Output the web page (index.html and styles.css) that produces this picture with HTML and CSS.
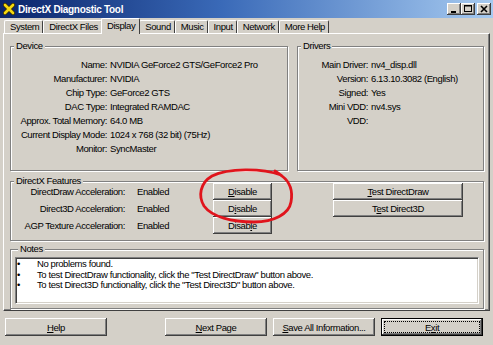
FILE: index.html
```html
<!DOCTYPE html>
<html>
<head>
<meta charset="utf-8">
<title>DirectX Diagnostic Tool</title>
<link rel="stylesheet" href="styles.css">
</head>
<body>
<div class="window">
  <div class="titlebar">
    <svg class="appicon" width="12" height="12" viewBox="0 0 12 12">
      <path d="M2 2 L10 10 M10 2 L2 10" stroke="#3a3000" stroke-width="4.2" stroke-linecap="round"/>
      <path d="M2 2 L10 10 M10 2 L2 10" stroke="#f4d810" stroke-width="2.6" stroke-linecap="round"/>
    </svg>
    <span class="title">DirectX Diagnostic Tool</span>
    <div class="controls">
      <span class="ctl"><svg width="14" height="12" viewBox="0 0 14 12"><rect x="4" y="8" width="5" height="2" fill="#000"/></svg></span>
      <span class="ctl"><svg width="14" height="12" viewBox="0 0 14 12"><rect x="3.5" y="2.5" width="7" height="6" fill="none" stroke="#000"/><rect x="3.5" y="2.5" width="7" height="1" fill="#000"/></svg></span>
      <span class="ctl close"><svg width="14" height="12" viewBox="0 0 14 12"><path d="M4 3 L10 9 M10 3 L4 9" stroke="#000" stroke-width="1.6"/></svg></span>
    </div>
  </div>

  <div class="body">
    <div class="tabs">
      <span class="tab">System</span>
      <span class="tab">DirectX Files</span>
      <span class="tab active">Display</span>
      <span class="tab">Sound</span>
      <span class="tab">Music</span>
      <span class="tab">Input</span>
      <span class="tab">Network</span>
      <span class="tab">More Help</span>
    </div>

    <div class="panel">
      <div class="toprow">
        <fieldset class="group device">
          <legend>Device</legend>
          <div class="kv kv-device">
            <span class="k">Name:</span><span class="v">NVIDIA GeForce2 GTS/GeForce2 Pro</span>
            <span class="k">Manufacturer:</span><span class="v">NVIDIA</span>
            <span class="k">Chip Type:</span><span class="v">GeForce2 GTS</span>
            <span class="k">DAC Type:</span><span class="v">Integrated RAMDAC</span>
            <span class="k">Approx. Total Memory:</span><span class="v">64.0 MB</span>
            <span class="k">Current Display Mode:</span><span class="v">1024 x 768 (32 bit) (75Hz)</span>
            <span class="k">Monitor:</span><span class="v">SyncMaster</span>
          </div>
        </fieldset>
        <fieldset class="group drivers">
          <legend>Drivers</legend>
          <div class="kv kv-drivers">
            <span class="k">Main Driver:</span><span class="v">nv4_disp.dll</span>
            <span class="k">Version:</span><span class="v">6.13.10.3082 (English)</span>
            <span class="k">Signed:</span><span class="v">Yes</span>
            <span class="k">Mini VDD:</span><span class="v">nv4.sys</span>
            <span class="k">VDD:</span><span class="v"></span>
          </div>
        </fieldset>
      </div>

      <fieldset class="group features">
        <legend>DirectX Features</legend>
        <div class="feat">
          <div class="featgrid">
            <span class="fk">DirectDraw Acceleration:</span><span class="fs">Enabled</span><button class="btn small"><u>D</u>isable</button>
            <span class="fk">Direct3D Acceleration:</span><span class="fs">Enabled</span><button class="btn small">D<u>i</u>sable</button>
            <span class="fk">AGP Texture Acceleration:</span><span class="fs">Enabled</span><button class="btn small">Disab<u>l</u>e</button>
          </div>
          <div class="tests">
            <button class="btn test"><u>T</u>est DirectDraw</button>
            <button class="btn test">T<u>e</u>st Direct3D</button>
          </div>
        </div>
      </fieldset>

      <fieldset class="group notes">
        <legend>Notes</legend>
        <div class="notebox">
          <div class="note"><span class="bullet">•</span><span>No problems found.</span></div>
          <div class="note"><span class="bullet">•</span><span>To test DirectDraw functionality, click the "Test DirectDraw" button above.</span></div>
          <div class="note"><span class="bullet">•</span><span>To test Direct3D functionality, click the "Test Direct3D" button above.</span></div>
        </div>
      </fieldset>
    </div>

    <div class="actions">
      <button class="btn wide"><u>H</u>elp</button>
      <button class="btn wide push"><u>N</u>ext Page</button>
      <button class="btn wide"><u>S</u>ave All Information...</button>
      <button class="btn wide default"><span class="focus">E<u>x</u>it</span></button>
    </div>
  </div>

  <svg class="markup" width="493" height="345" viewBox="0 0 493 345">
    <path d="M281 175 C262 168 228 168 212 176 C200 183 198 196 204 206 C212 217 232 222 254 222 C274 222 289 214 291 202 C293 191 290 182 282 176 C279 174 277 172 275 171"
          fill="none" stroke="#e0141c" stroke-width="2.8" stroke-linecap="round"/>
  </svg>
</div>
</body>
</html>
```
FILE: styles.css
```css
* { box-sizing: border-box; }

body {
  margin: 0;
  background: #d4d0c8;
  font-family: "Liberation Sans", Arial, sans-serif;
  font-size: 9.5px;
  letter-spacing: -0.4px;
  color: #000;
}

.window {
  position: relative;
  width: 493px;
  height: 345px;
  background: #d4d0c8;
  overflow: hidden;
}

/* title bar */
.titlebar {
  display: flex;
  align-items: center;
  height: 18px;
  padding-left: 3px;
  background: linear-gradient(to right, #0a246a 0%, #3a6ab8 45%, #a6caf0 100%);
}
.appicon { flex: none; }
.title {
  margin-left: 3px;
  color: #fff;
  font-weight: bold;
  font-size: 10px;
  letter-spacing: -0.3px;
}
.controls {
  margin-left: auto;
  display: flex;
  padding-right: 2px;
}
.ctl {
  display: flex;
  width: 14px;
  height: 12px;
  background: #d4d0c8;
  box-shadow: inset -1px -1px #404040, inset 1px 1px #fff, inset -2px -2px #808080;
}
.ctl.close { margin-left: 2px; }

/* body */
.body {
  padding: 0 3px;
}

.tabs {
  display: flex;
  align-items: flex-end;
  height: 15px;
  padding-left: 1px;
}
.tab {
  height: 13px;
  line-height: 12px;
  padding: 0 3px 0 5px;
  border: 1px solid;
  border-color: #fff #404040 transparent #fff;
  border-bottom: none;
  border-radius: 2px 2px 0 0;
  background: #d4d0c8;
  white-space: nowrap;
}
.tab.active {
  position: relative;
  z-index: 1;
  height: 16px;
  line-height: 13px;
  margin: 0 -2px -1px -1px;
  padding: 0 4px 0 5px;
}
.tab.active + .tab { margin-left: 1px; }

.panel {
  border: 1px solid;
  border-color: #fff #404040 #404040 #fff;
  box-shadow: inset -1px -1px #808080;
  padding: 7px 5px 1px 6px;
}

/* group boxes */
.group {
  margin: 0;
  padding: 0;
  min-width: 0;
  border: 1px solid #808080;
  box-shadow: inset 1px 1px #fff, 1px 1px #fff;
}
.group legend {
  margin-left: 3px;
  padding: 0 2px;
  line-height: 10px;
  background: #d4d0c8;
}

.toprow {
  display: flex;
  gap: 9px;
  height: 130px;
}
.device { width: 278px; flex: none; }
.drivers { flex: 1; }

.kv {
  display: grid;
  grid-auto-rows: 14px;
  column-gap: 3px;
  line-height: 14px;
  padding-top: 7px;
  white-space: nowrap;
}
.kv-device { grid-template-columns: 96px auto; }
.kv-drivers { grid-template-columns: 70px auto; }
.kv .k { text-align: right; }

.features { margin-top: 5px; padding-bottom: 6px; }
.feat {
  display: flex;
  margin-top: -3px;
}
.featgrid {
  display: grid;
  grid-template-columns: 114px 88px 59px;
  grid-auto-rows: 17px;
  align-items: center;
  white-space: nowrap;
}
.fk { text-align: right; }
.fs { padding-left: 12px; }
.tests {
  display: flex;
  flex-direction: column;
  margin-left: 61px;
}

.btn {
  font: inherit;
  letter-spacing: inherit;
  color: #000;
  background: #d4d0c8;
  border: none;
  margin: 0;
  padding: 0;
  height: 17px;
  box-shadow: inset -1px -1px #404040, inset 1px 1px #fff, inset -2px -2px #808080;
  white-space: nowrap;
}
.btn u { text-decoration: underline; }
.btn.small { width: 59px; }
.btn.test { width: 130px; }

.notes { margin-top: 3px; padding: 3px 4px 4px 4px; }
.notebox {
  height: 47px;
  background: #fff;
  border: 1px solid;
  border-color: #808080 #fff #fff #808080;
  box-shadow: inset 1px 1px #404040, inset -1px -1px #d4d0c8;
  padding: 1px;
  overflow: hidden;
}
.note {
  display: flex;
  line-height: 10.5px;
  white-space: nowrap;
}
.bullet { width: 20px; flex: none; }

.actions {
  display: flex;
  gap: 6px;
  margin-top: 7px;
  padding: 0 7px 0 2px;
}
.btn.wide { width: 102px; height: 18px; }
.push { margin-left: auto; }
.btn.default {
  outline: 1px solid #000;
  outline-offset: -1px;
  box-shadow: inset -2px -2px #404040, inset 2px 2px #fff, inset -3px -3px #808080;
  display: flex;
  padding: 4px;
}
.focus {
  flex: 1;
  display: flex;
  align-items: center;
  justify-content: center;
  outline: 1px dotted #000;
}

.markup {
  position: absolute;
  left: 0;
  top: 0;
  pointer-events: none;
}
```
